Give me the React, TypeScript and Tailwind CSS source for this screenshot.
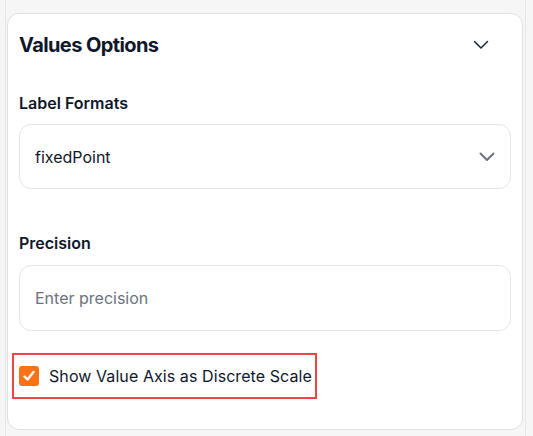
import React from "react";

export default function App() {
  return (
    <div
      className="h-[436px] w-[533px] overflow-hidden bg-[#f6f6f6] pl-[5px]"
      style={{ fontFamily: "Inter, 'Noto Sans', sans-serif" }}
    >
      <div className="h-full w-[521px] border-x border-[#e6e6e6] pl-px pt-[13px]">
        <div className="h-[417px] w-[516px] rounded-xl border border-[#e0e0e0] bg-white px-[11px] pt-[17px]">
          <div className="flex h-7 items-center justify-between">
            <h2 className="text-[20px] font-bold leading-7 tracking-[-0.03em] text-[#0f172a]">
              Values Options
            </h2>
            <svg
              width="16"
              height="10"
              viewBox="0 0 16 10"
              className="mr-[22px]"
              fill="none"
              stroke="#1e293b"
              strokeWidth="1.5"
              strokeLinecap="round"
              strokeLinejoin="round"
            >
              <path d="M1.5 1.5 L8 8 L14.5 1.5" />
            </svg>
          </div>

          <div className="mt-[32px] text-[16px] font-semibold leading-6 text-[#0f172a]">
            Label Formats
          </div>
          <div className="mt-[9px] flex h-[65px] items-center justify-between rounded-xl border border-[#e5e5e5] bg-white px-[15px]">
            <span className="text-[16px] leading-6 text-[#111827]">fixedPoint</span>
            <svg
              width="16"
              height="10"
              viewBox="0 0 16 10"
              fill="none"
              stroke="#6b7280"
              strokeWidth="2"
              strokeLinecap="round"
              strokeLinejoin="round"
            >
              <path d="M1.5 1.5 L8 8 L14.5 1.5" />
            </svg>
          </div>

          <div className="mt-[42px] text-[16px] font-semibold leading-6 text-[#0f172a]">
            Precision
          </div>
          <div className="mt-[10px] flex h-[66px] items-center rounded-xl border border-[#e5e5e5] bg-white px-[15px]">
            <span className="text-[16px] leading-6 text-[#6b7280]">Enter precision</span>
          </div>

          <div className="-ml-[7px] mt-[22px] flex w-fit items-center gap-[10px] border-2 border-[#ef4444] py-[9px] pl-[5px] pr-[3px]">
            <span className="flex h-5 w-5 items-center justify-center rounded-[3px] bg-[#f97316]">
              <svg
                width="14"
                height="14"
                viewBox="0 0 14 14"
                fill="none"
                stroke="white"
                strokeWidth="2.4"
                strokeLinecap="round"
                strokeLinejoin="round"
              >
                <path d="M2.5 7.5 L5.5 10.5 L11.5 3" />
              </svg>
            </span>
            <span className="text-[16px] leading-6 tracking-[0.005em] text-[#0f172a]">
              Show Value Axis as Discrete Scale
            </span>
          </div>
        </div>
      </div>
    </div>
  );
}
